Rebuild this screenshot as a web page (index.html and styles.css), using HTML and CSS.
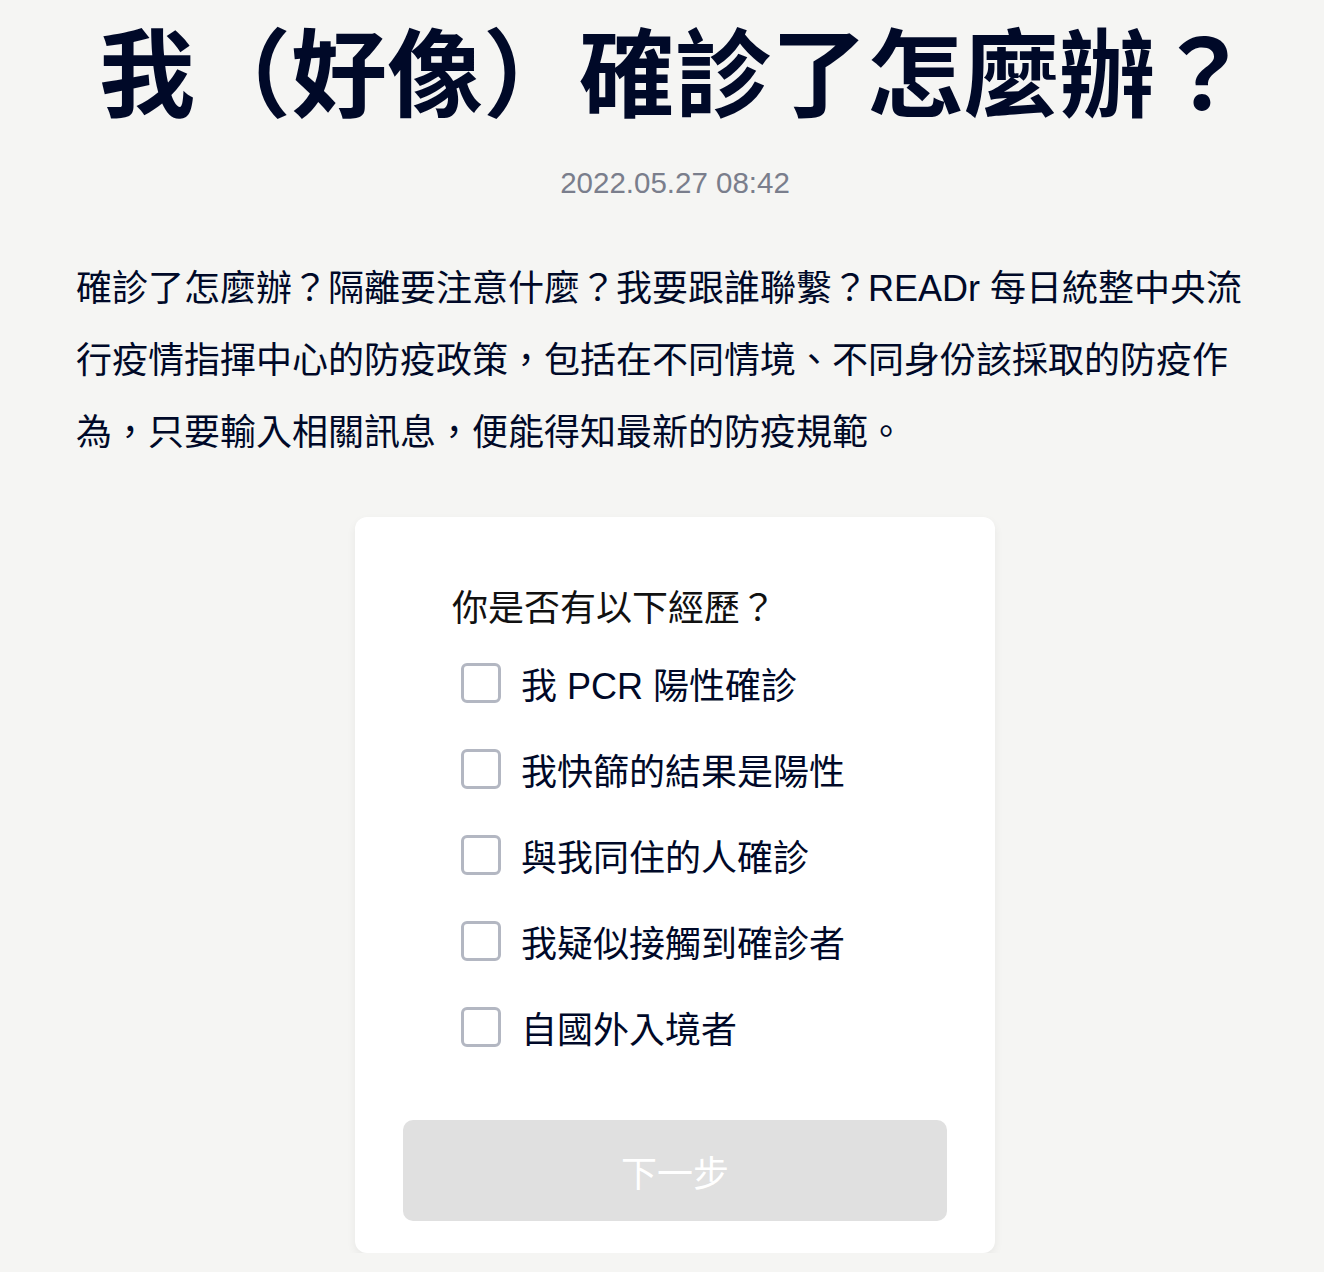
FILE: index.html
```html
<!DOCTYPE html>
<html lang="zh-Hant">
<head>
    <meta charset="UTF-8">
    <meta name="viewport" content="width=device-width, initial-scale=1.0">
    <title>我（好像）確診了怎麼辦？</title>
    <link rel="stylesheet" href="styles.css">
</head>
<body>
    <div class="container">
        <h1 class="title">我（好像）確診了怎麼辦？</h1>
        <div class="date-display">2022.05.27 08:42</div>
        <p class="intro">確診了怎麼辦？隔離要注意什麼？我要跟誰聯繫？READr 每日統整中央流行疫情指揮中心的防疫政策，包括在不同情境、不同身份該採取的防疫作為，只要輸入相關訊息，便能得知最新的防疫規範。</p>

        <div class="quiz-card">
            <div class="quiz-body">
                <div class="question">你是否有以下經歷？</div>
                <label class="option">
                    <input type="checkbox" name="exp" value="pcr"> <span>我 PCR 陽性確診</span>
                </label>
                <label class="option">
                    <input type="checkbox" name="exp" value="rapid"> <span>我快篩的結果是陽性</span>
                </label>
                <label class="option">
                    <input type="checkbox" name="exp" value="housemate"> <span>與我同住的人確診</span>
                </label>
                <label class="option">
                    <input type="checkbox" name="exp" value="contact"> <span>我疑似接觸到確診者</span>
                </label>
                <label class="option">
                    <input type="checkbox" name="exp" value="abroad"> <span>自國外入境者</span>
                </label>
            </div>
            <button class="next-btn" disabled>下一步</button>
        </div>
    </div>
</body>
</html>
```

FILE: styles.css
```css
body {
    font-family: "Liberation Sans", "Noto Sans CJK TC", sans-serif;
    margin: 0;
    background-color: #f5f5f3;
    color: #000928;
}
.container {
    padding: 0 50px 0 76px;
}
.title {
    margin: 0;
    padding-top: 8px;
    font-family: "Noto Sans CJK TC", sans-serif;
    font-size: 96px;
    font-weight: 700;
    line-height: 120px;
    text-align: center;
    white-space: nowrap;
    color: #000928;
}
.date-display {
    margin-top: 40px;
    text-align: center;
    font-size: 29.5px;
    line-height: 30px;
    color: #7a7e8c;
}
.intro {
    max-width: 1172px;
    margin: 55px 0 0;
    font-size: 36px;
    line-height: 72px;
    color: #000928;
}
.quiz-card {
    width: 640px;
    box-sizing: border-box;
    margin: 48px auto 0;
    padding: 63px 48px 32px;
    background: white;
    border-radius: 12px;
    box-shadow: 0 4px 10px rgba(0, 0, 0, 0.06);
}
.quiz-body {
    padding-left: 49px;
}
.question {
    font-family: "Noto Sans CJK TC", sans-serif;
    font-size: 36px;
    line-height: 50px;
    margin-bottom: 10px;
    color: #111;
}
.option {
    display: flex;
    align-items: center;
    gap: 20px;
    height: 86px;
    padding-left: 9px;
    font-size: 36px;
    color: #000928;
    cursor: pointer;
}
.option input {
    appearance: none;
    -webkit-appearance: none;
    width: 40px;
    height: 40px;
    margin: 0;
    border: 3px solid #b3b7c2;
    border-radius: 6px;
    box-sizing: border-box;
    background: white;
}
.next-btn {
    display: block;
    width: 100%;
    height: 101px;
    margin-top: 50px;
    border: none;
    border-radius: 10px;
    background: #e0e0e0;
    color: white;
    font-family: "Noto Sans CJK TC", sans-serif;
    font-size: 36px;
}
.next-btn:disabled {
    cursor: not-allowed;
}
```
